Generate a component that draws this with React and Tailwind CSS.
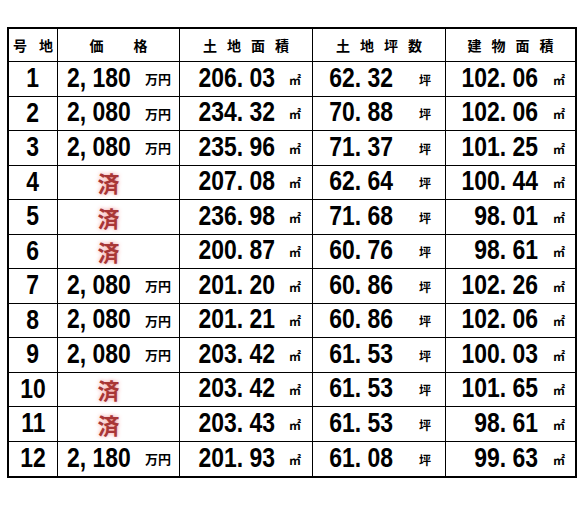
import React from "react";

const rows = [
  ["1", "2, 180", "206. 03", "62. 32", "102. 06"],
  ["2", "2, 080", "234. 32", "70. 88", "102. 06"],
  ["3", "2, 080", "235. 96", "71. 37", "101. 25"],
  ["4", null, "207. 08", "62. 64", "100. 44"],
  ["5", null, "236. 98", "71. 68", "98. 01"],
  ["6", null, "200. 87", "60. 76", "98. 61"],
  ["7", "2, 080", "201. 20", "60. 86", "102. 26"],
  ["8", "2, 080", "201. 21", "60. 86", "102. 06"],
  ["9", "2, 080", "203. 42", "61. 53", "100. 03"],
  ["10", null, "203. 42", "61. 53", "101. 65"],
  ["11", null, "203. 43", "61. 53", "98. 61"],
  ["12", "2, 180", "201. 93", "61. 08", "99. 63"],
];

const num =
  "inline-block whitespace-nowrap font-['Liberation_Sans','Arial',sans-serif] font-bold text-[27px] leading-none text-black scale-x-[0.85]";
const jp = "font-['Noto_Sans_CJK_JP',sans-serif] font-bold text-black leading-none";

const Unit = ({ children, size = "text-[12px]" }) => (
  <span className={`${jp} ${size}`}>{children}</span>
);

const Head = ({ chars, gap, first }) => (
  <div
    className={`h-[33px] border-b ${first ? "" : "border-l"} border-black flex items-center justify-center ${gap}`}
  >
    {chars.map((c) => (
      <span key={c} className={`${jp} text-[14px]`}>
        {c}
      </span>
    ))}
  </div>
);

export default function App() {
  return (
    <div className="w-[584px] h-[505px] bg-white pt-[27px] pl-[7px]">
      <div className="w-[570px] border-2 border-black grid grid-cols-[48px_122px_133px_133px_130px]">
        <Head chars={["号", "地"]} gap="gap-[12px]" first />
        <Head chars={["価", "格"]} gap="gap-[30px]" />
        <Head chars={["土", "地", "面", "積"]} gap="gap-[10px]" />
        <Head chars={["土", "地", "坪", "数"]} gap="gap-[10px]" />
        <Head chars={["建", "物", "面", "積"]} gap="gap-[10px]" />

        {rows.map((r, i) => {
          const b = i === rows.length - 1 ? "" : "border-b";
          return (
            <React.Fragment key={r[0]}>
              <div className={`h-[34.5px] ${b} border-black flex items-center justify-center`}>
                <span className={`${num} origin-center`}>{r[0]}</span>
              </div>
              <div className={`h-[34.5px] ${b} border-l border-black flex items-center`}>
                {r[1] ? (
                  <div className="flex items-center pl-[9px]">
                    <div className="w-[78px]">
                      <span className={`${num} origin-left`}>{r[1]}</span>
                    </div>
                    <Unit size="text-[13px]">万円</Unit>
                  </div>
                ) : (
                  <div className="w-full flex justify-center pr-[20px]">
                    <span className="font-['Noto_Sans_CJK_JP',sans-serif] font-bold text-[22px] leading-none text-[#a83636] [text-shadow:0_0_4px_#f29a9a]">
                      済
                    </span>
                  </div>
                )}
              </div>
              <div className={`h-[34.5px] ${b} border-l border-black flex items-center`}>
                <div className="w-[95px] text-right">
                  <span className={`${num} origin-right`}>{r[2]}</span>
                </div>
                <span className="ml-[14px]">
                  <Unit>㎡</Unit>
                </span>
              </div>
              <div className={`h-[34.5px] ${b} border-l border-black flex items-center`}>
                <div className="w-[80px] text-right">
                  <span className={`${num} origin-right`}>{r[3]}</span>
                </div>
                <span className="ml-[26px]">
                  <Unit>坪</Unit>
                </span>
              </div>
              <div className={`h-[34.5px] ${b} border-l border-black flex items-center`}>
                <div className="w-[92px] text-right">
                  <span className={`${num} origin-right`}>{r[4]}</span>
                </div>
                <span className="ml-[15px]">
                  <Unit>㎡</Unit>
                </span>
              </div>
            </React.Fragment>
          );
        })}
      </div>
    </div>
  );
}
